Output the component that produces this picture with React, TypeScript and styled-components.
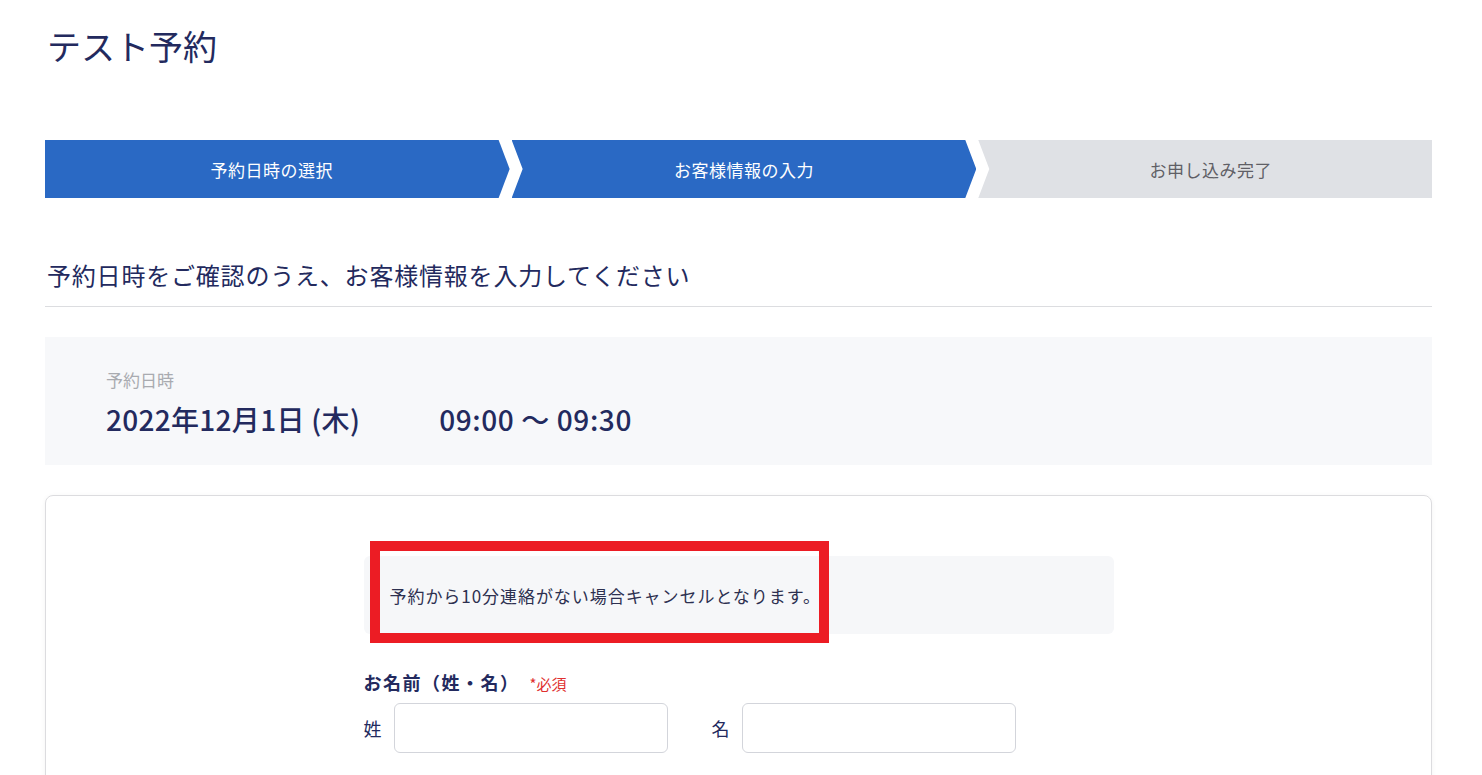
import React from "react";
import styled, { createGlobalStyle } from "styled-components";

const GlobalStyle = createGlobalStyle`
  html, body {
    margin: 0;
    overflow: hidden;
    background: #ffffff;
  }
  body {
    font-family: "Noto Sans CJK JP", "Noto Sans", sans-serif;
    color: #232a5e;
  }
`;

const Page = styled.div`
  padding: 0 50px 0 45px;
`;

const Title = styled.h1`
  margin: 20px 0 0 2px;
  font-size: 34px;
  font-weight: 400;
  line-height: 51px;
  color: #232a5e;
`;

const Steps = styled.div`
  display: flex;
  gap: 2px;
  margin-top: 69px;
  height: 58px;
`;

const Step = styled.div<{ $active: boolean; $pos: "first" | "middle" | "last" }>`
  box-sizing: border-box;
  flex: ${(p) => (p.$pos === "last" ? "1" : "0 0 33.5%")};
  display: flex;
  align-items: center;
  justify-content: center;
  font-size: 17px;
  letter-spacing: 0.5px;
  background: ${(p) => (p.$active ? "#2a69c4" : "#dfe1e5")};
  color: ${(p) => (p.$active ? "#ffffff" : "#5f5f66")};
  clip-path: ${(p) =>
    p.$pos === "first"
      ? "polygon(0 0, calc(100% - 11px) 0, 100% 50%, calc(100% - 11px) 100%, 0 100%)"
      : p.$pos === "middle"
      ? "polygon(0 0, calc(100% - 11px) 0, 100% 50%, calc(100% - 11px) 100%, 0 100%, 11px 50%)"
      : "polygon(0 0, 100% 0, 100% 100%, 0 100%, 11px 50%)"};
  padding-left: ${(p) => (p.$pos === "first" ? "0" : "11px")};
  padding-right: ${(p) => (p.$pos === "last" ? "0" : "11px")};
`;

const Heading = styled.h2`
  margin: 57px 0 0;
  padding: 0 0 11px 2px;
  font-size: 24px;
  font-weight: 400;
  letter-spacing: 0.8px;
  line-height: 40px;
  border-bottom: 1px solid #dcdde0;
  color: #232a5e;
`;

const DateBox = styled.div`
  margin-top: 30px;
  background: #f7f8fa;
  padding: 30px 61px 28px;
`;

const DateLabel = styled.div`
  font-size: 17px;
  line-height: 26px;
  color: #a9abb0;
`;

const DateRow = styled.div`
  display: flex;
  gap: 79px;
  margin-top: 8px;
  font-size: 28px;
  font-weight: 500;
  letter-spacing: 0.3px;
  line-height: 36px;
  color: #232a5e;
`;

const TimeRange = styled.span`
  letter-spacing: 0.6px;
`;

const Card = styled.div`
  margin-top: 30px;
  border: 1px solid #dcdcdf;
  border-radius: 8px;
  box-shadow: 0 1px 5px rgba(0, 0, 0, 0.05);
  padding: 60px 0 80px;
`;

const Column = styled.div`
  width: 750px;
  margin: 0 auto;
`;

const Notice = styled.div`
  position: relative;
  background: #f6f7f9;
  border-radius: 6px;
  height: 78px;
  display: flex;
  align-items: center;
  padding-left: 26px;
  font-size: 17px;
  letter-spacing: 0.95px;
  color: #2d3050;
`;

const Highlight = styled.div`
  position: absolute;
  left: 6px;
  top: -15px;
  width: 459px;
  height: 102px;
  box-sizing: border-box;
  border: 10px solid #ec1c24;
`;

const FieldLabel = styled.div`
  margin-top: 35px;
  display: flex;
  align-items: baseline;
  gap: 10px;
  font-size: 18px;
  font-weight: 700;
  letter-spacing: 1.5px;
  line-height: 26px;
  color: #232a5e;
`;

const Required = styled.span`
  font-size: 15px;
  font-weight: 400;
  letter-spacing: 0;
  color: #e0302f;
`;

const InputRow = styled.div`
  display: flex;
  align-items: center;
  margin-top: 6px;
  gap: 44px;
`;

const InputGroup = styled.label`
  display: flex;
  align-items: center;
  gap: 12px;
  font-size: 18px;
  color: #232a5e;
`;

const TextInput = styled.input`
  width: 274px;
  height: 50px;
  box-sizing: border-box;
  border: 1px solid #d3d5db;
  border-radius: 6px;
  background: #ffffff;
  font-size: 16px;
  padding: 0 12px;
  outline: none;
`;

const steps = [
  { label: "予約日時の選択", active: true },
  { label: "お客様情報の入力", active: true },
  { label: "お申し込み完了", active: false },
];

const App = () => {
  return (
    <Page>
      <GlobalStyle />
      <Title>テスト予約</Title>
      <Steps>
        {steps.map((s, i) => (
          <Step
            key={s.label}
            $active={s.active}
            $pos={i === 0 ? "first" : i === steps.length - 1 ? "last" : "middle"}
          >
            {s.label}
          </Step>
        ))}
      </Steps>
      <Heading>予約日時をご確認のうえ、お客様情報を入力してください</Heading>
      <DateBox>
        <DateLabel>予約日時</DateLabel>
        <DateRow>
          <span>2022年12月1日 (木)</span>
          <TimeRange>09:00 〜 09:30</TimeRange>
        </DateRow>
      </DateBox>
      <Card>
        <Column>
          <Notice>
            予約から10分連絡がない場合キャンセルとなります。
            <Highlight />
          </Notice>
          <FieldLabel>
            お名前（姓・名）<Required>*必須</Required>
          </FieldLabel>
          <InputRow>
            <InputGroup>
              姓
              <TextInput type="text" />
            </InputGroup>
            <InputGroup>
              名
              <TextInput type="text" />
            </InputGroup>
          </InputRow>
        </Column>
      </Card>
    </Page>
  );
};

export default App;
